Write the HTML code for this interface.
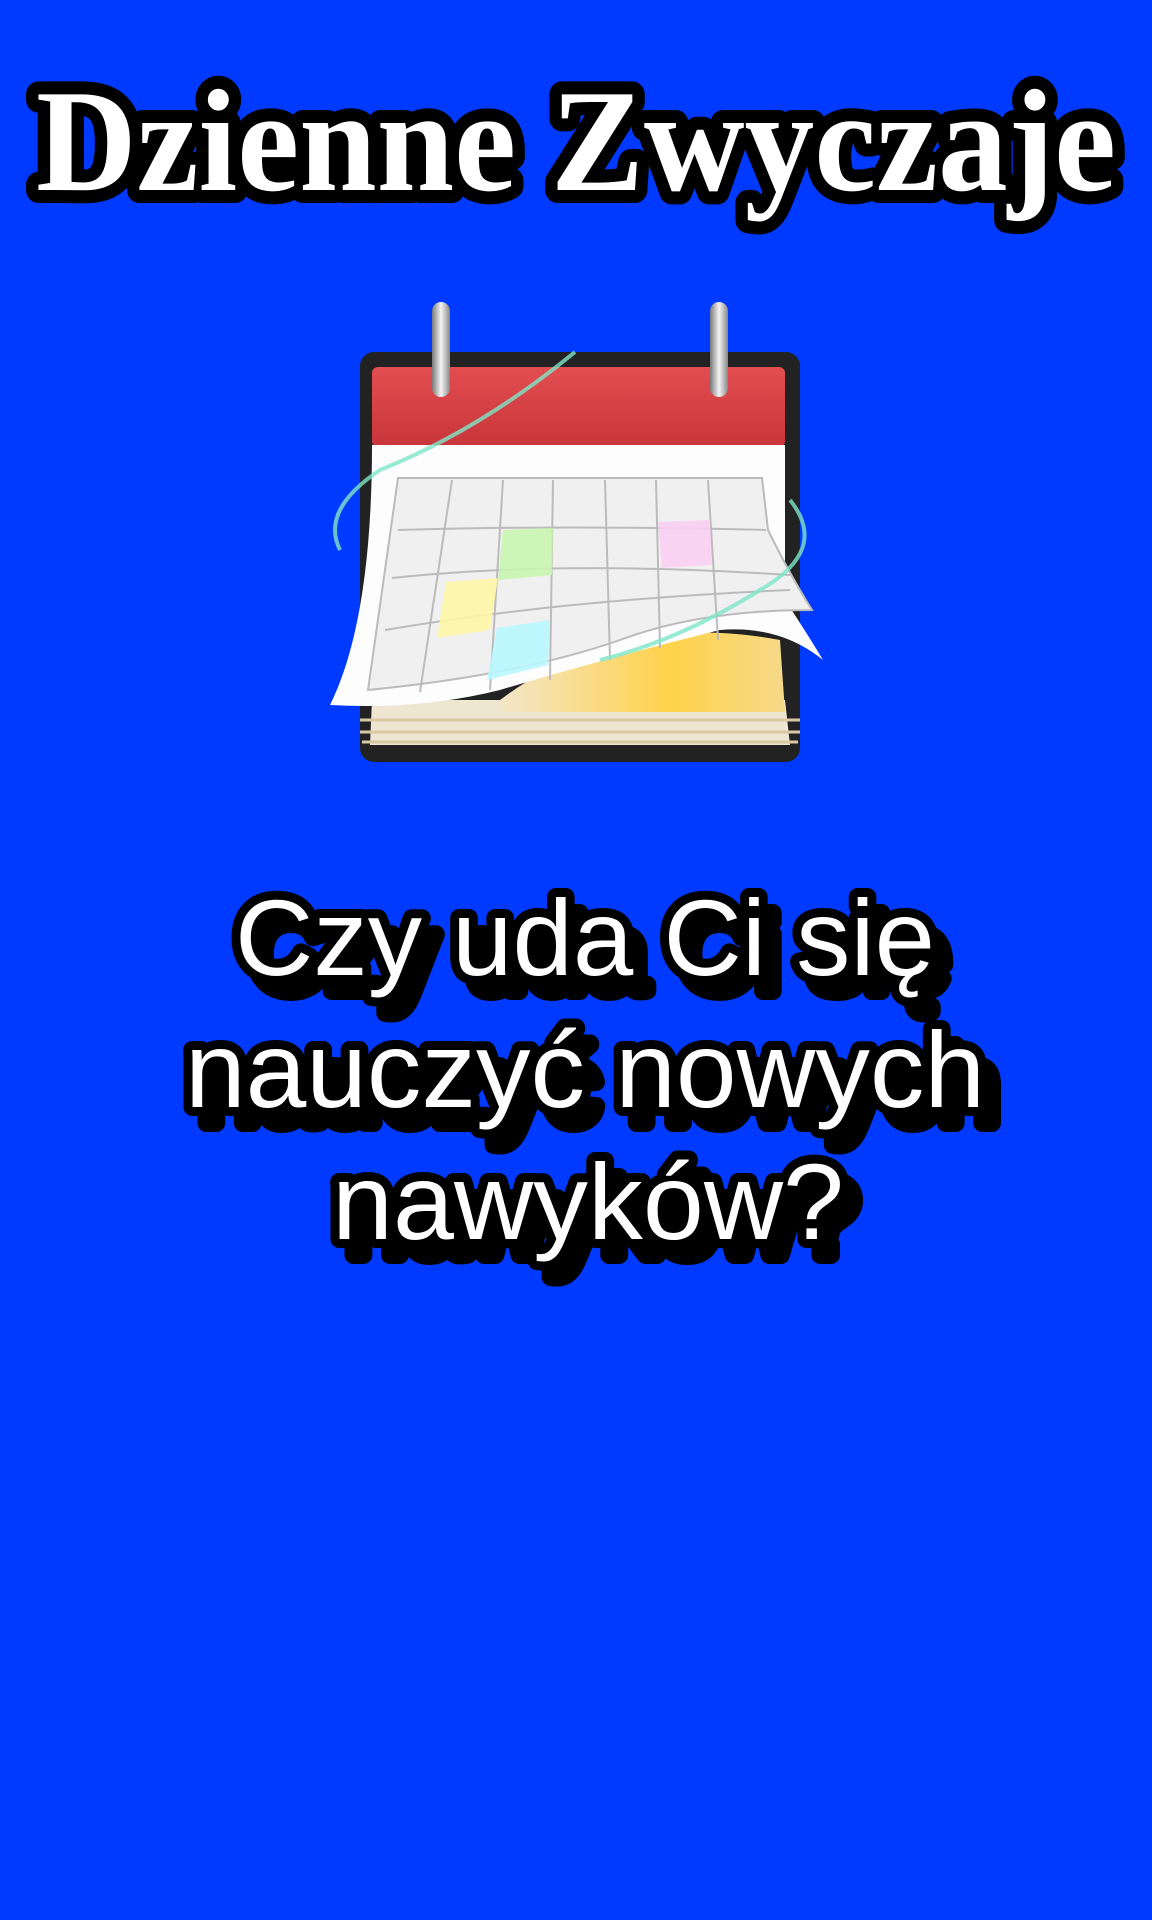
<!DOCTYPE html>
<html><head><meta charset="utf-8"><style>
html,body{margin:0;padding:0;background:#0039ff;width:1152px;height:1920px;overflow:hidden}
svg{position:absolute;left:0;top:0}
</style></head><body>
<svg width="1152" height="1920" viewBox="0 0 1152 1920">
<defs>
<linearGradient id="red" x1="0" y1="0" x2="0" y2="1"><stop offset="0" stop-color="#e24e50"/><stop offset="1" stop-color="#c8353a"/></linearGradient>
<linearGradient id="ring" x1="0" y1="0" x2="1" y2="0"><stop offset="0" stop-color="#777"/><stop offset=".5" stop-color="#f4f4f4"/><stop offset="1" stop-color="#888"/></linearGradient>
<linearGradient id="gold" x1="0" y1="0" x2="1" y2="0"><stop offset="0" stop-color="#f3e6c8"/><stop offset=".6" stop-color="#ffd24a"/><stop offset="1" stop-color="#f6d98a"/></linearGradient>
</defs>
<!-- title -->
<text x="576" y="190" text-anchor="middle" font-family="Liberation Serif, serif" font-weight="bold" font-size="146" textLength="1080" lengthAdjust="spacingAndGlyphs" fill="#fff" stroke="#000" stroke-width="26" stroke-linejoin="round" paint-order="stroke">Dzienne Zwyczaje</text>
<!-- calendar -->
<rect x="360" y="352" width="440" height="410" rx="14" fill="#222"/>
<rect x="372" y="367" width="413" height="80" rx="6" fill="url(#red)"/>
<path d="M372 700 L785 700 L790 745 L370 745 Z" fill="#efe6d2"/>
<path d="M360 720 L800 720 M360 732 L800 732 M362 742 L798 742" stroke="#d9c9a3" stroke-width="3"/>
<path d="M500 700 Q620 610 780 640 L785 712 L500 712 Z" fill="url(#gold)"/>
<path d="M372 445 L785 445 L785 600 Q805 630 823 660 Q780 625 720 630 Q600 660 500 690 Q420 710 330 705 Q372 620 372 445 Z" fill="#fdfdfd"/>
<g fill="none" stroke="#bbb" stroke-width="2">
<path d="M398 478 L762 478 L768 530 Q790 575 812 610 Q700 610 620 640 Q520 675 368 690 Z" fill="#f0f0f0"/>
<path d="M398 530 Q560 525 766 530"/><path d="M392 578 Q560 560 790 575"/><path d="M385 630 Q560 600 790 590"/>
<path d="M452 480 L420 692"/><path d="M503 480 L490 690"/><path d="M553 480 L550 680"/><path d="M605 480 L610 660"/><path d="M656 480 L660 648"/><path d="M708 480 L718 640"/>
</g>
<path d="M503 530 L553 528 L552 575 L498 580 Z" fill="#c8f5b0" opacity=".9"/>
<path d="M658 522 L710 520 L712 565 L662 568 Z" fill="#f8d0f2" opacity=".9"/>
<path d="M446 582 L498 578 L490 630 L437 638 Z" fill="#fdf6a6" opacity=".9"/>
<path d="M497 628 L550 620 L548 665 L487 680 Z" fill="#b8f8ff" opacity=".9"/>
<rect x="432" y="302" width="18" height="95" rx="9" fill="url(#ring)"/>
<rect x="710" y="302" width="18" height="95" rx="9" fill="url(#ring)"/>
<path d="M575 352 Q480 430 380 470 Q320 510 340 550 M790 500 Q830 550 760 590 Q680 640 600 660" stroke="#7ee6c8" stroke-width="4" fill="none" opacity=".8"/>
<!-- question -->
<g font-family="Liberation Sans, Arial, sans-serif" font-size="108" text-anchor="middle" stroke-linejoin="round">
<g fill="#000" stroke="#000" stroke-width="18" transform="translate(14,16)">
<text x="585" y="975" textLength="700" lengthAdjust="spacingAndGlyphs">Czy uda Ci się</text>
<text x="585" y="1107" textLength="800" lengthAdjust="spacingAndGlyphs">nauczyć nowych</text>
<text x="588" y="1239" textLength="512" lengthAdjust="spacingAndGlyphs">nawyków?</text>
</g>
<g fill="#fff" stroke="#000" stroke-width="18" paint-order="stroke">
<text x="585" y="975" textLength="700" lengthAdjust="spacingAndGlyphs">Czy uda Ci się</text>
<text x="585" y="1107" textLength="800" lengthAdjust="spacingAndGlyphs">nauczyć nowych</text>
<text x="588" y="1239" textLength="512" lengthAdjust="spacingAndGlyphs">nawyków?</text>
</g>
</g>
</svg>
</body></html>
